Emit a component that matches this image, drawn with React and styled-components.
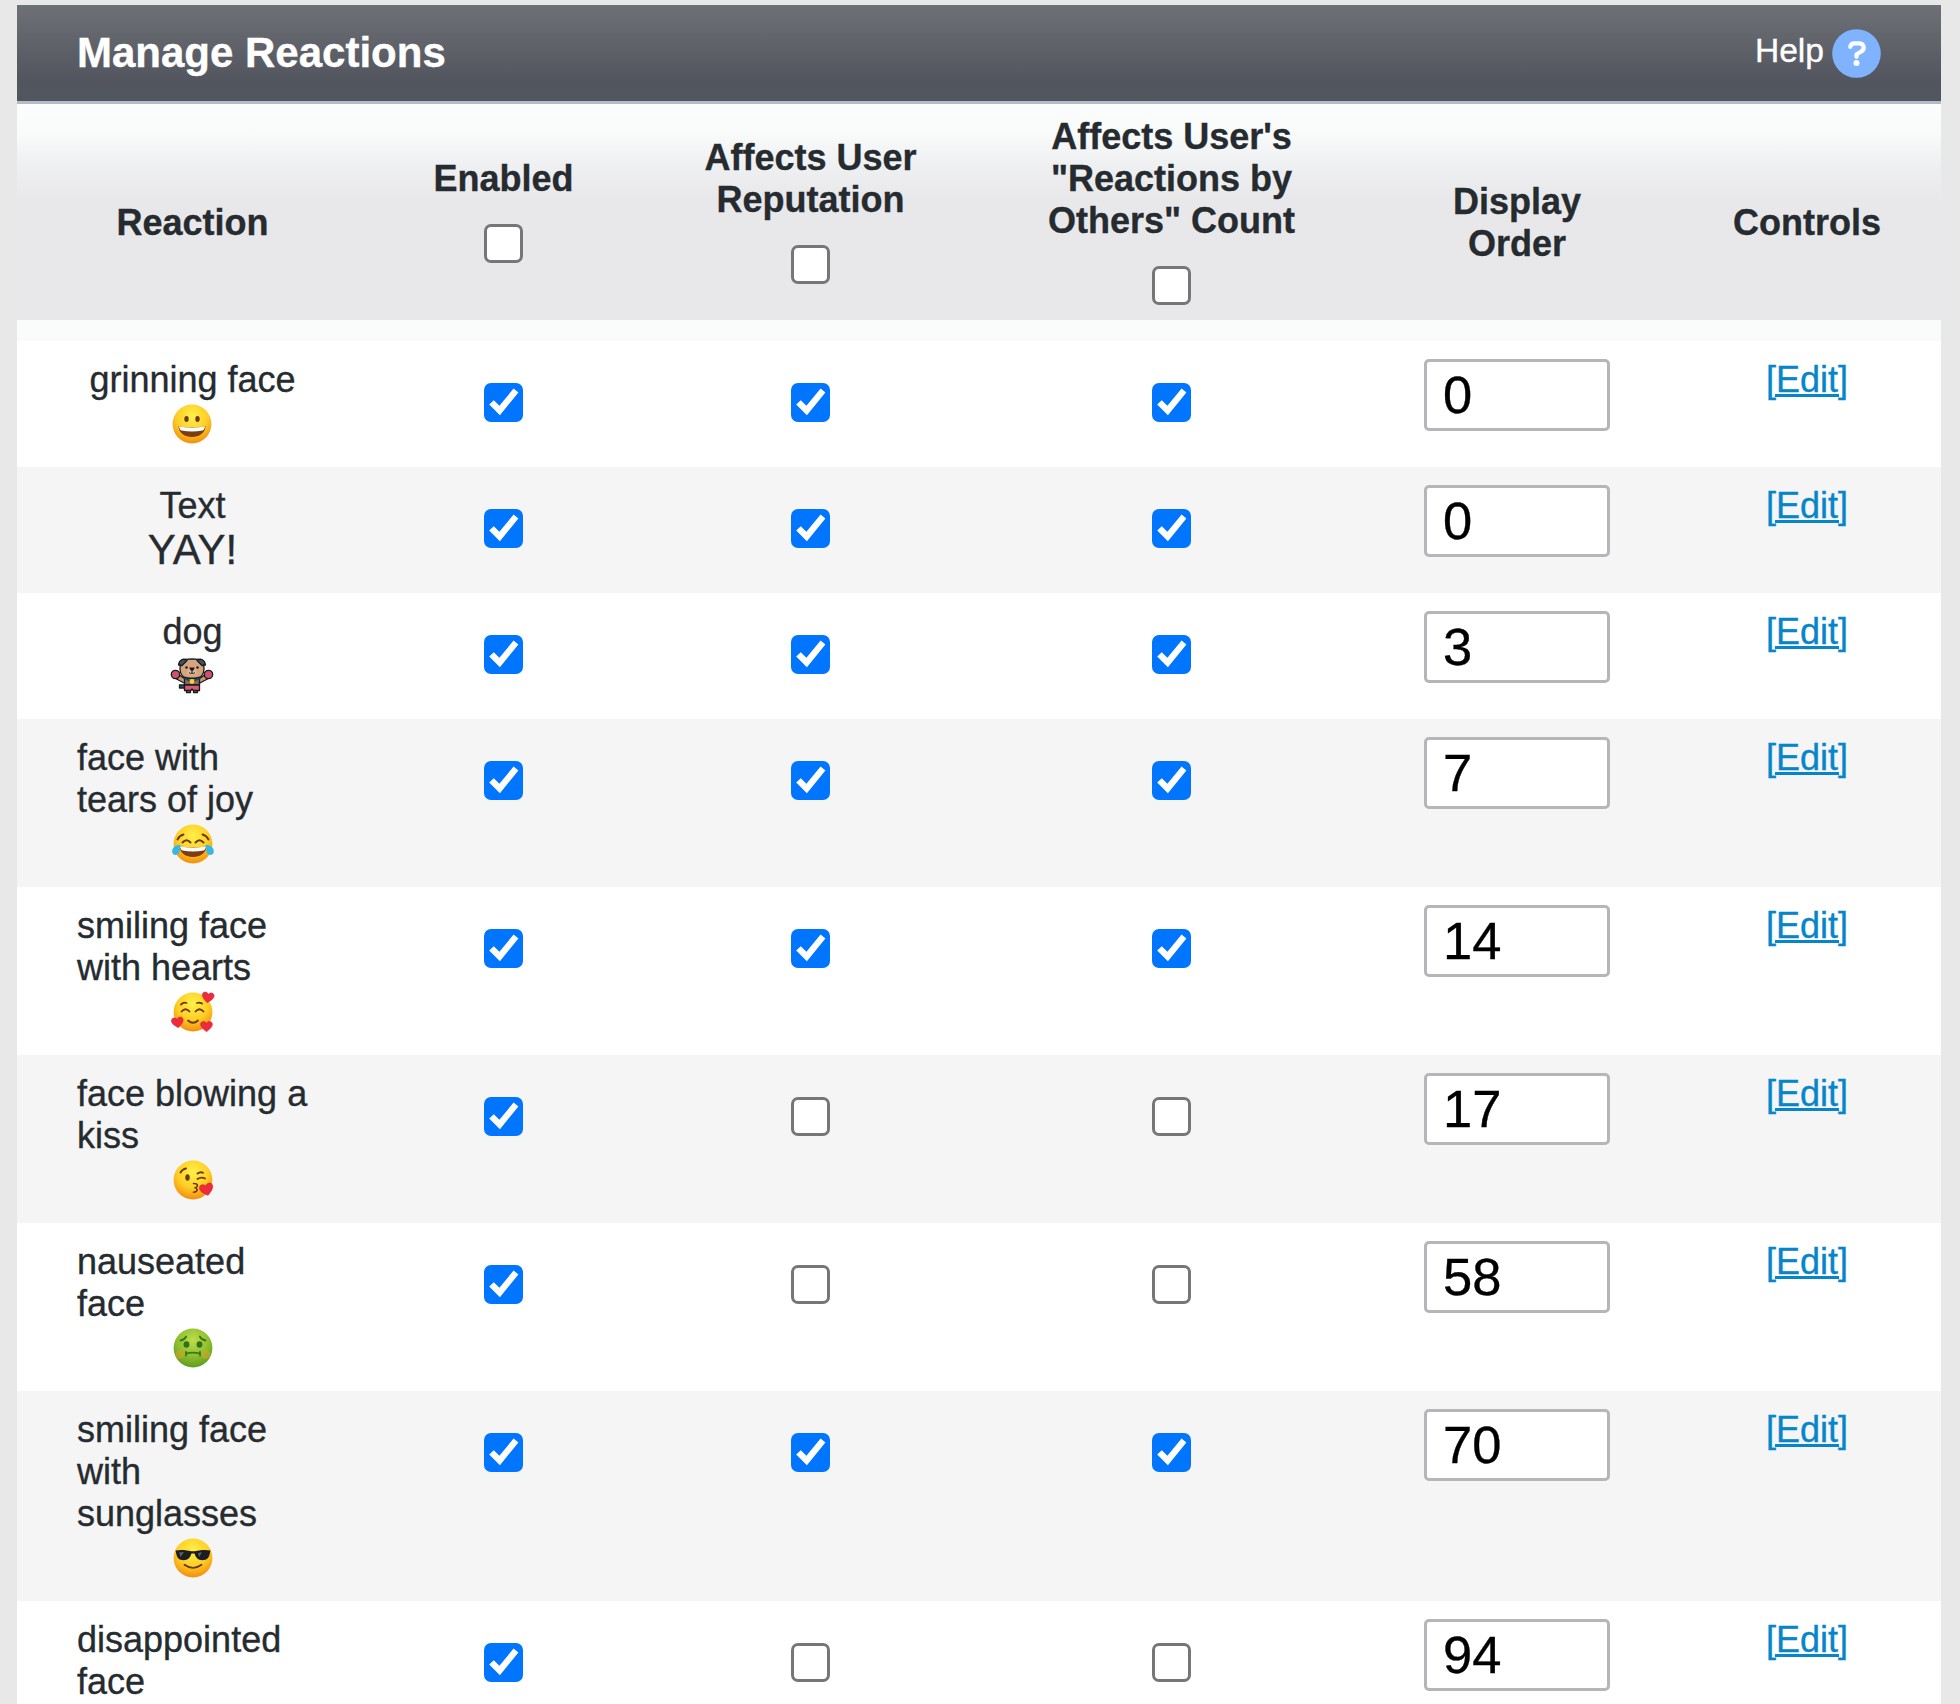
import React, { useState } from "react";
import styled, { createGlobalStyle } from "styled-components";

const GlobalStyle = createGlobalStyle`
  * { box-sizing: border-box; }
  body {
    margin: 0;
    background: #e8e8e9;
    font-family: "Liberation Sans", Arial, Helvetica, sans-serif;
    color: #262b30;
    -webkit-text-stroke: 0.35px currentColor;
  }
`;

const COLUMNS = "351px 271px 343px 379px 312px 268px";

const Page = styled.div`
  height: 1704px;
  padding: 5px 19px 0 17px;
  overflow: hidden;
`;

const Panel = styled.section`
  background: #fff;
  font-size: 36px;
  line-height: 42px;
`;

const TitleBar = styled.header`
  display: flex;
  align-items: center;
  justify-content: space-between;
  height: 99px;
  padding: 0 60px;
  border-bottom: 3px solid #b4bcc5;
  background: linear-gradient(#6e7077, #5f6169 45%, #52555e 80%, #50565f);
`;

const Title = styled.h1`
  margin: 0;
  font-size: 42px;
  line-height: 48px;
  color: #fff;
`;

const HelpLink = styled.a`
  display: flex;
  align-items: center;
  gap: 8px;
  color: #fff;
  font-size: 33.6px;
  text-decoration: none;
`;

const HelpText = styled.span`
  padding-bottom: 5px;
`;

const HeadRow = styled.div`
  display: grid;
  grid-template-columns: ${COLUMNS};
  align-items: center;
  height: 237px;
  background:
    linear-gradient(#fafbfb, #fafbfb) 0 100% / 100% 21px no-repeat,
    linear-gradient(#fcfefd, #f9fafa 30px, #eff0f1 60px, #e8e8ea 96px, #e8e8ea);
`;

const HeadCell = styled.div`
  display: flex;
  flex-direction: column;
  align-items: center;
  text-align: center;
  font-weight: bold;
  white-space: pre-line;
`;

const HeadCheck = styled.div`
  padding: 24px 0 25px;
  height: 88px;
`;

const Row = styled.div`
  display: grid;
  grid-template-columns: ${COLUMNS};
  justify-items: center;
  align-items: start;
  padding: 18px 0;
  background: ${(p) => (p.$odd ? "#f5f5f5" : "#fff")};
`;

const NameCell = styled.div`
  display: flex;
  flex-direction: column;
  align-items: center;
`;

const Name = styled.div`
  width: ${(p) => (p.$wrapped ? "231px" : "auto")};
  white-space: pre-line;
`;

const Symbol = styled.div`
  display: flex;
  align-items: center;
  justify-content: center;
  height: 48px;
  padding-bottom: 2px;
  font-size: 42px;
`;

const CheckCell = styled.div`
  padding-top: 24px;
`;

const Box = styled.button`
  display: block;
  width: 39px;
  height: 39px;
  padding: 0;
  border: ${(p) => (p.$on ? "0" : "3px solid #767678")};
  border-radius: 7px;
  background: ${(p) => (p.$on ? "#0075ff" : "#fff")};
`;

const OrderInput = styled.input`
  width: 186px;
  height: 72px;
  padding: 0 15px 2px 16px;
  border: 3px solid #b5b6ba;
  border-radius: 5px;
  background: #fff;
  color: #000;
  font: 52.5px "Liberation Sans", Arial, sans-serif;
  -webkit-text-stroke: 0.35px #000;
  outline: none;
`;

const EditLink = styled.a`
  color: #0785cb;
  text-decoration: underline;
  text-decoration-thickness: 3px;
  text-underline-offset: 2px;
`;

const Art = styled.svg`
  display: block;
`;

function Checkbox({ initial }) {
  const [on, setOn] = useState(initial);
  return (
    <Box type="button" role="checkbox" aria-checked={on} $on={on} onClick={() => setOn(!on)}>
      {on && (
        <Art width="39" height="39" viewBox="0 0 39 39">
          <path d="M5.2 21.6 9.8 17.2 15.4 22.700 29.600 5.600 34.400 9.500 15.900 32.200Z" fill="#fff" />
        </Art>
      )}
    </Box>
  );
}

const INK = "#6b3a0c";

function Heart({ x, y, s = 1, r = 0 }) {
  return (
    <path
      transform={`translate(${x} ${y}) rotate(${r}) scale(${s})`}
      d="M0 6C-4 3-6.4.6-6.2-2-6-5-2-6 0-2.8 2-6 6-5 6.2-2 6.4.6 4 3 0 6Z"
      fill="#ee2b3b"
      stroke="#c9162b"
      strokeWidth=".5"
    />
  );
}

function Grin() {
  return (
    <g>
      <path d="M8.500 24C15 26 29 26 35.500 24 35 31.500 29 35 22 35S9 31.500 8.500 24Z" fill="#7c3d10" />
      <path d="M9 24.300C15 26.200 29 26.200 35 24.300 34.700 26.700 34 28 32.500 28.500 26 29.800 18 29.800 11.500 28.500 10 28 9.300 26.700 9 24.300Z" fill="#fff" />
    </g>
  );
}

const FACES = {
  grin: (
    <>
      <ellipse cx="16.500" cy="17" rx="2.200" ry="3" fill={INK} />
      <ellipse cx="27.500" cy="17" rx="2.200" ry="3" fill={INK} />
      <Grin />
    </>
  ),
  joy: (
    <>
      <g fill="none" stroke={INK} strokeWidth="1.900" strokeLinecap="round">
        <path d="M6.500 17.500Q8.500 13.500 12.500 12.500M37.500 17.500Q35.500 13.500 31.500 12.500" />
        <path d="M11.500 20.500Q15.500 16 19.500 20.500M24.500 20.500Q28.500 16 32.500 20.500" />
      </g>
      <Grin />
      <path d="M9.500 22.800C4 23 .8 26 1.200 30 1.800 34 7 33.800 8.200 30.500 9 28 8.800 25 9.500 22.800ZM34.500 22.800C40 23 43.200 26 42.800 30 42.200 34 37 33.800 35.800 30.500 35 28 35.200 25 34.500 22.800Z" fill="#35b7e8" />
    </>
  ),
  hearts: (
    <>
      <g fill="none" stroke={INK} strokeWidth="1.800" strokeLinecap="round">
        <path d="M10 14.500Q12.500 12 15.500 13M26 13Q28.500 12.200 31 13.500" />
        <path d="M10.500 21.500Q14.500 17 18.500 21.500M24.500 21.500Q28.500 17 32.500 21.500" />
        <path d="M17 30.500Q22 35 27 30.500" />
      </g>
      <Heart x={37} y={7} s={0.95} r={8} />
      <Heart x={6.500} y={32} s={0.95} r={-8} />
      <Heart x={35.500} y={36} s={0.95} />
    </>
  ),
  kiss: (
    <>
      <ellipse cx="16.500" cy="19.500" rx="2.200" ry="3.200" fill={INK} />
      <g fill="none" stroke={INK} strokeWidth="1.900" strokeLinecap="round" strokeLinejoin="round">
        <path d="M9.500 14.500Q11.500 11 15 10.500M26.500 15.500Q29.500 13.300 32 14.800M26.500 21Q30 18.600 34 20.500" />
        <path d="M22.500 25.500C27.500 25.500 27.500 28.800 24 29.800 27.500 30.800 26.500 34 22.500 34.200" strokeWidth="1.600" />
      </g>
      <Heart x={35.500} y={31} s={1.080} r={-14} />
    </>
  ),
  nauseated: (
    <>
      <circle cx="9" cy="28.500" r="4.500" fill="#d0a52a" opacity=".6" />
      <circle cx="35" cy="28.500" r="4.500" fill="#d0a52a" opacity=".6" />
      <ellipse cx="15.500" cy="18.500" rx="2.900" ry="3.300" fill="#317019" />
      <ellipse cx="28.500" cy="18.500" rx="2.900" ry="3.300" fill="#317019" />
      <g fill="none" stroke="#397819" strokeWidth="1.800" strokeLinecap="round">
        <path d="M9.500 14.500Q13.500 14 15.200 10.500M34.500 14.500Q30.500 14 28.800 10.500" />
        <path d="M15 29.500V26M29 29.500V26M15 27.600Q22 25.600 29 27.600" />
      </g>
    </>
  ),
  cool: (
    <>
      <path d="M4.500 14.500C10 13.300 16 14 20 15.300H24C28 14 34 13.300 39.500 14.500L38.800 17.500C37.800 22.500 35.500 24.200 31.500 24.200 27 24.200 25 22 23.500 17.500H20.500C19 22 17 24.200 12.500 24.200 8.500 24.200 6.200 22.500 5.200 17.500Z" fill="#1c1d20" />
      <path d="M8 16.500 13 16 9.500 21ZM27 17 31 16.300 28 21Z" fill="#5c6064" />
      <path d="M13.500 28.800Q22 35 30.500 28.800" fill="none" stroke={INK} strokeWidth="1.900" strokeLinecap="round" />
    </>
  ),
};

function Emoji({ kind }) {
  const green = kind === "nauseated";
  const id = `face-${kind}`;
  return (
    <Art width="44" height="44" viewBox="0 0 44 44">
      <defs>
        <radialGradient id={id} cx=".5" cy=".3" r=".72">
          <stop offset="0" stopColor={green ? "#bfdc4c" : "#fff04a"} />
          <stop offset=".55" stopColor={green ? "#8fc030" : "#ffcf26"} />
          <stop offset="1" stopColor={green ? "#5b9a1c" : "#f28a0c"} />
        </radialGradient>
      </defs>
      <circle cx="22" cy="22" r="19.400" fill={`url(#${id})`} />
      {FACES[kind]}
    </Art>
  );
}

function BoxingDog() {
  return (
    <Art width="44" height="44" viewBox="0 0 44 44">
      <g stroke="#171b20" strokeWidth="1.300" strokeLinejoin="round">
        <path d="M16.500 32v6.500h4V34h3v4.500h4V32Z" fill="#a97858" />
        <path d="M9.500 31h5v3h-5Z" fill="#35576b" />
        <path d="M6.500 25 15 29.500V25L10 21.500ZM37.500 25 29 29.500V25L34 21.500Z" fill="#c99873" />
        <path d="M14.500 24h15v7h-15Z" fill="#7c6a62" />
        <path d="M14.500 31h15v5.500h-6.200l-1.300-1.500-1.300 1.500h-6.200Z" fill="#d85970" />
        <path d="M12 6.500C15 4.500 29 4.500 32 6.500 35 12 34.500 19 31.500 22 28 25 16 25 12.500 22 9.500 19 9 12 12 6.500Z" fill="#d4a580" />
        <path d="M17 6.500C13.500 3.800 9 5.800 8.600 11L12 11.500ZM27 6.500C30.500 3.800 35 5.800 35.400 11L32 11.500Z" fill="#46515b" />
        <circle cx="5.500" cy="20.500" r="4.200" fill="#cf526b" />
        <circle cx="38.500" cy="20.500" r="4.200" fill="#cf526b" />
      </g>
      <circle cx="16.500" cy="13.500" r="1.200" fill="#171b20" />
      <circle cx="27.500" cy="13.500" r="1.200" fill="#171b20" />
      <ellipse cx="22" cy="18" rx="4.500" ry="3.500" fill="#e5b990" />
      <path d="M19.300 13.500h5.400L23.500 16.500h-3Z" fill="#171b20" />
      <path d="M22 16v3M19 18.500q1.500 2 3 .5 1.500 1.500 3-.5" fill="none" stroke="#171b20" />
      <path d="m14.500 24.500 7.500 3 7.500-3" fill="none" stroke="#2c4455" strokeWidth="1.500" />
      <circle cx="22" cy="27.500" r="2.400" fill="#f1d52f" />
    </Art>
  );
}

function HelpIcon() {
  return (
    <Art width="49" height="49" viewBox="0 0 49 49">
      <circle cx="24.500" cy="24.500" r="24.300" fill="#80b3ff" />
      <path
        d="M18.300 17.800Q18.800 14.300 22.500 14.300H26.500C32.800 14.300 33.200 20.500 28.500 23L24.500 25.300V27.800"
        fill="none"
        stroke="#fff"
        strokeWidth="4.200"
        strokeLinecap="round"
        strokeLinejoin="round"
      />
      <circle cx="24.500" cy="34" r="3" fill="#fff" />
    </Art>
  );
}

const HEADINGS = [
  { label: "Reaction" },
  { label: "Enabled", check: true },
  { label: "Affects User\nReputation", check: true },
  { label: "Affects User's\n\"Reactions by\nOthers\" Count", check: true },
  { label: "Display\nOrder" },
  { label: "Controls" },
];

const REACTIONS = [
  { name: "grinning face", symbol: <Emoji kind="grin" />, checks: [true, true, true], order: 0 },
  { name: "Text", symbol: "YAY!", checks: [true, true, true], order: 0 },
  { name: "dog", symbol: <BoxingDog />, checks: [true, true, true], order: 3 },
  { name: "face with\ntears of joy", symbol: <Emoji kind="joy" />, checks: [true, true, true], order: 7 },
  { name: "smiling face\nwith hearts", symbol: <Emoji kind="hearts" />, checks: [true, true, true], order: 14 },
  { name: "face blowing a\nkiss", symbol: <Emoji kind="kiss" />, checks: [true, false, false], order: 17 },
  { name: "nauseated\nface", symbol: <Emoji kind="nauseated" />, checks: [true, false, false], order: 58 },
  { name: "smiling face\nwith\nsunglasses", symbol: <Emoji kind="cool" />, checks: [true, true, true], order: 70 },
  { name: "disappointed\nface", symbol: null, checks: [true, false, false], order: 94 },
];

export default function App() {
  return (
    <>
      <GlobalStyle />
      <Page>
        <Panel>
          <TitleBar>
            <Title>Manage Reactions</Title>
            <HelpLink>
              <HelpText>Help</HelpText>
              <HelpIcon />
            </HelpLink>
          </TitleBar>
          <HeadRow>
            {HEADINGS.map((h) => (
              <HeadCell key={h.label}>
                {h.label}
                {h.check && (
                  <HeadCheck>
                    <Checkbox initial={false} />
                  </HeadCheck>
                )}
              </HeadCell>
            ))}
          </HeadRow>
          {REACTIONS.map((r, i) => (
            <Row key={r.name} $odd={i % 2 === 1}>
              <NameCell>
                <Name $wrapped={r.name.includes("\n")}>{r.name}</Name>
                <Symbol>{r.symbol}</Symbol>
              </NameCell>
              {r.checks.map((on, k) => (
                <CheckCell key={k}>
                  <Checkbox initial={on} />
                </CheckCell>
              ))}
              <OrderInput defaultValue={r.order} aria-label="Display order" />
              <EditLink>[Edit]</EditLink>
            </Row>
          ))}
        </Panel>
      </Page>
    </>
  );
}
